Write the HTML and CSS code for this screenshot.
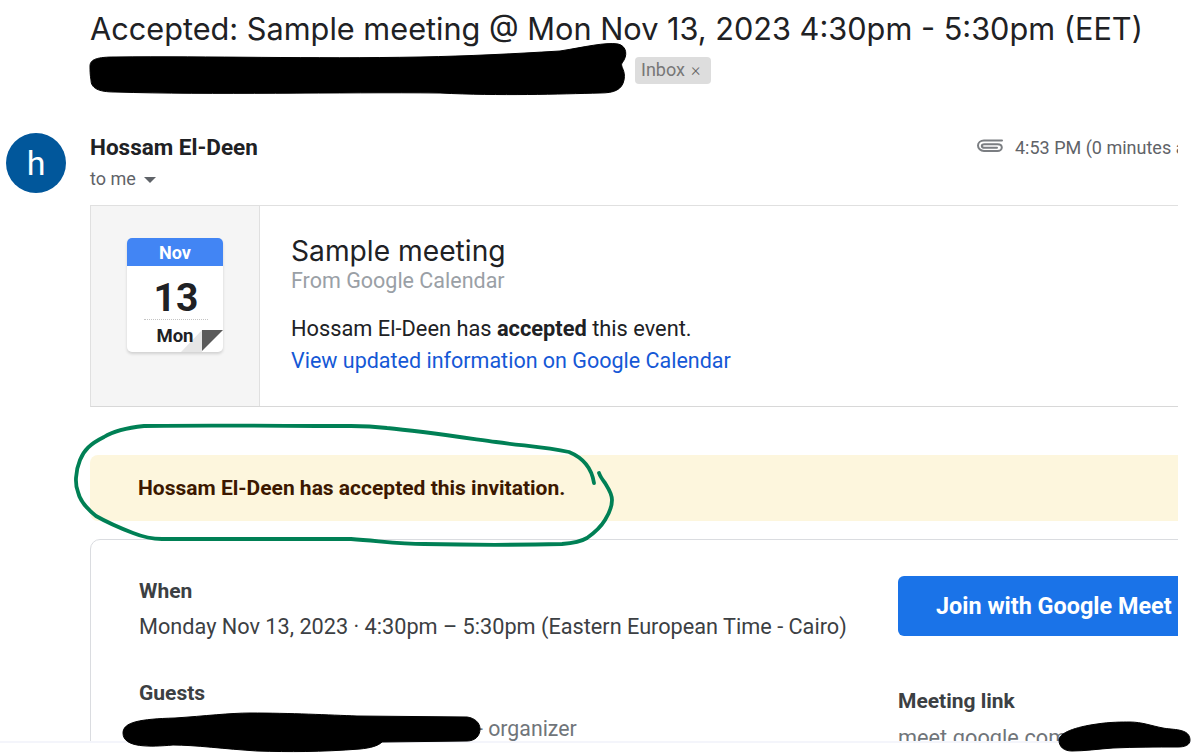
FILE: index.html
```html
<!DOCTYPE html>
<html lang="en">
<head>
<meta charset="utf-8">
<title>Accepted: Sample meeting</title>
<link rel="stylesheet" href="styles.css">
</head>
<body>
<div class="page">
  <main class="mail">
    <header class="subject">
      <h1 class="subject-title">Accepted: Sample meeting @ Mon Nov 13, 2023 4:30pm - 5:30pm (EET)</h1>
      <div class="subject-line2">
        <span class="subject-hidden"></span>
        <span class="chip">Inbox <span class="chip-x">×</span></span>
      </div>
    </header>

    <section class="sender">
      <div class="avatar">h</div>
      <div class="sender-info">
        <div class="sender-name">Hossam El-Deen</div>
        <div class="sender-to">to me <span class="caret"></span></div>
      </div>
      <div class="sender-meta">
        <svg class="clip-icon" width="26" height="15" viewBox="0 0 26 15" fill="none" stroke="#7b7e82" stroke-width="2" stroke-linecap="round"><path d="M25 2.500H7C3.500 2.500 1 4.700 1 7.500S3.500 13 7 13h13.500c2.400 0 4.300-1.500 4.300-3.500S22.900 6.200 20.500 6.200H7.500C6 6.200 4.800 6.800 4.800 7.900S6 9.700 7.500 9.700H20"/></svg>
        <span class="sender-time">4:53 PM (0 minutes ago)</span>
      </div>
    </section>

    <section class="summary">
      <div class="summary-side">
        <div class="cal">
          <svg class="cal-fold" width="58" height="24" viewBox="0 0 58 24"><polygon points="16,24 37,2 37,24" fill="#e6e6e6"/><polygon points="37,2 58,2 37,23" fill="#5a5a5a"/></svg>
          <div class="cal-month">Nov</div>
          <div class="cal-day">13</div>
          <div class="cal-weekday">Mon</div>
        </div>
      </div>
      <div class="summary-main">
        <h2 class="summary-title">Sample meeting</h2>
        <div class="summary-from">From Google Calendar</div>
        <p class="summary-text">Hossam El-Deen has <b>accepted</b> this event.</p>
        <a class="summary-link" href="#">View updated information on Google Calendar</a>
      </div>
    </section>

    <div class="notice">Hossam El-Deen has accepted this invitation.</div>

    <section class="details">
      <div class="details-left">
        <h3 class="label">When</h3>
        <p class="value">Monday Nov 13, 2023 · 4:30pm – 5:30pm (Eastern European Time - Cairo)</p>
        <h3 class="label label-guests">Guests</h3>
        <p class="guest"><span class="guest-name"></span><span class="guest-role">- organizer</span></p>
      </div>
      <div class="details-right">
        <a class="join" href="#">Join with Google Meet</a>
        <h3 class="label label-link">Meeting link</h3>
        <p class="value meet">meet.google.com</p>
      </div>
    </section>
  </main>
  <div class="strip"></div>

  <svg class="marks" width="1191" height="753" viewBox="0 0 1191 753">
    <path class="ink" d="M90 66C90 59 98 57 115 57C210 56 310 59 420 57C470 56 510 54 560 51C585 47 605 42 618 44C627 46 628 56 622 63C620 67 626 70 624 80C622 90 614 93 600 93C560 94 500 96 440 93C340 92 210 95 115 92C98 92 91 88 91 80C90 75 90 70 90 66Z"/>
    <path class="ink" d="M123 733C123 722 140 719 175 718C205 716 230 713 250 713C290 713 330 715 357 716L467 717C475 718 480 723 480 729C480 736 475 741 467 741L382 742C378 746 370 748 360 749C320 752 290 752 257 751C225 749 195 745 173 745C150 747 123 748 123 733Z"/>
    <path class="ink" d="M1059 740C1059 733 1075 727 1097 724C1110 722 1122 722 1130 722C1142 722 1152 726 1163 728C1172 730 1190 728 1190 740C1190 745 1185 747 1178 747C1155 747 1135 747 1113 748C1098 749 1085 751 1072 751C1064 751 1059 747 1059 740Z"/>
    <path class="loop" d="M594 483C592 470 586 459 569 452C545 447 525 446 496 442C460 437 420 431 387 428C370 426 360 426 351 426C290 426 200 425 144 426C125 428 112 432 104 437C90 444 84 450 80 460C75 472 75 485 78 492C80 501 86 508 96 516C110 524 120 528 133 533C143 537 152 539 162 539L351 539C380 541 400 544 424 544C470 545 520 545 562 544C575 543 582 541 587 538C597 531 602 525 605 520C610 512 612 505 612 500C612 493 608 488 605 483C602 479 600 476 599 473"/>
  </svg>
</div>
</body>
</html>
```

FILE: styles.css
```css
* { box-sizing: border-box; }
html, body { margin: 0; padding: 0; background: #fff; }
body { font-family: Roboto, "Liberation Sans", sans-serif; color: #202124; }

.page { position: relative; width: 1191px; height: 753px; overflow: hidden; background: #fff; }
.mail { width: 1178px; height: 741px; overflow: hidden; }

/* subject */
.subject { padding: 11px 0 0 90px; height: 120px; }
.subject-title { margin: 0; font-family: Inter, Roboto, sans-serif; font-size: 30.700px; line-height: 36px; font-weight: 400; white-space: nowrap; color: #202124; }
.subject-line2 { display: flex; align-items: center; margin-top: 10px; }
.subject-hidden { width: 545px; height: 27px; }
.chip { display: flex; align-items: center; gap: 6px; height: 27px; width: 76px; padding: 0 0 2px 6px; background: #dddddd; border-radius: 4px; color: #777; font-size: 18px; }
.chip-x { font-size: 18px; color: #666; font-weight: 300; }

/* sender */
.sender { display: flex; padding: 13px 0 0 6px; height: 85px; }
.avatar { flex: none; width: 60px; height: 60px; border-radius: 50%; background: #01579b; color: #fff; display: flex; align-items: center; justify-content: center; font-size: 34px; font-weight: 400; }
.sender-info { margin-left: 24px; }
.sender-name { font-size: 22.500px; font-weight: 700; line-height: 28px; color: #202124; }
.sender-to { font-size: 18px; line-height: 24px; color: #5f6368; margin-top: 6px; display: flex; align-items: center; gap: 8px; }
.caret { width: 0; height: 0; border-left: 6px solid transparent; border-right: 6px solid transparent; border-top: 6px solid #5f6368; margin-top: 2px; }
.sender-meta { margin-left: auto; width: 201px; flex: none; display: flex; align-items: flex-start; gap: 12px; overflow: hidden; white-space: nowrap; padding-top: 7px; margin-top: -1px; }
.clip-icon { flex: none; margin-top: -1px; }
.sender-time { font-size: 18px; line-height: 16px; color: #5f6368; padding-top: 1px; }

/* summary card */
.summary { display: flex; width: 1100px; height: 202px; margin-left: 90px; border: 1px solid #e0e0e0; border-bottom-color: #d8d8d8; }
.summary-side { flex: none; width: 169px; background: #f5f5f5; border-right: 1px solid #e0e0e0; padding: 32px 0 0 36px; }
.cal { position: relative; width: 96px; height: 114px; background: #fff; border-radius: 5px; box-shadow: 0 2px 3px rgba(0,0,0,.15); text-align: center; overflow: hidden; }
.cal-month { position: relative; height: 28px; background: #4285f4; color: #fff; font-size: 18px; font-weight: 700; line-height: 29px; }
.cal-day { position: relative; margin: 7px 15px 0 17px; height: 47px; border-bottom: 1px dotted #c4c4c4; font-size: 39px; font-weight: 700; line-height: 50px; color: #202124; }
.cal-weekday { position: relative; font-size: 18.500px; font-weight: 700; line-height: 33px; padding-right: 0; color: #202124; }
.cal-fold { position: absolute; right: 0; bottom: 0; }
.summary-main { padding: 28px 0 0 31px; }
.summary-title { margin: 0; font-family: Inter, Roboto, sans-serif; font-size: 28.200px; line-height: 35px; font-weight: 400; color: #202124; }
.summary-from { font-size: 21.500px; line-height: 24px; color: #9aa0a6; margin-top: 0; }
.summary-text { margin: 20px 0 0; font-size: 21.800px; line-height: 32px; color: #202124; }
.summary-link { display: block; font-size: 21.500px; line-height: 32px; color: #1558d6; text-decoration: none; }

/* notice */
.notice { width: 1100px; height: 66px; margin: 48px 0 0 90px; padding-left: 48px; background: #fdf6dd; border-radius: 8px 0 0 8px; color: #3c1800; font-size: 21px; font-weight: 700; line-height: 67px; white-space: nowrap; }

/* details card */
.details { display: flex; width: 1100px; height: 300px; margin: 18px 0 0 90px; border: 1px solid #dadce0; border-radius: 10px 0 0 0; padding: 36px 0 0 48px; }
.details-left { width: 759px; flex: none; margin-top: 1px; }
.label { margin: 0; font-size: 21px; font-weight: 700; line-height: 28px; color: #3c4043; }
.value { margin: 8px 0 0; font-size: 21.700px; line-height: 28px; color: #3c4043; white-space: nowrap; }
.label-guests { margin-top: 38px; }
.guest { margin: 8px 0 0; display: flex; align-items: center; font-size: 21.300px; line-height: 28px; color: #70757a; }
.guest-name { width: 338px; height: 28px; }
.details-right { flex: 1; }
.join { display: flex; align-items: center; height: 60px; margin-top: 0; padding-left: 38px; background: #1a73e8; border-radius: 6px 0 0 6px; color: #fff; font-size: 23.400px; font-weight: 700; text-decoration: none; white-space: nowrap; }
.label-link { margin-top: 51px; }
.meet { color: #70757a; margin-top: 9px; }

/* bottom edge */
.strip { height: 12px; background: #fff; border-top: 2px solid #f4f5fb; }

/* hand-drawn marks over the screenshot */
.marks { position: absolute; left: 0; top: 0; pointer-events: none; }
.ink { fill: #000; stroke: #000; stroke-width: 1; }
.loop { fill: none; stroke: #008055; stroke-width: 3.800; stroke-linecap: round; stroke-linejoin: round; }
```
